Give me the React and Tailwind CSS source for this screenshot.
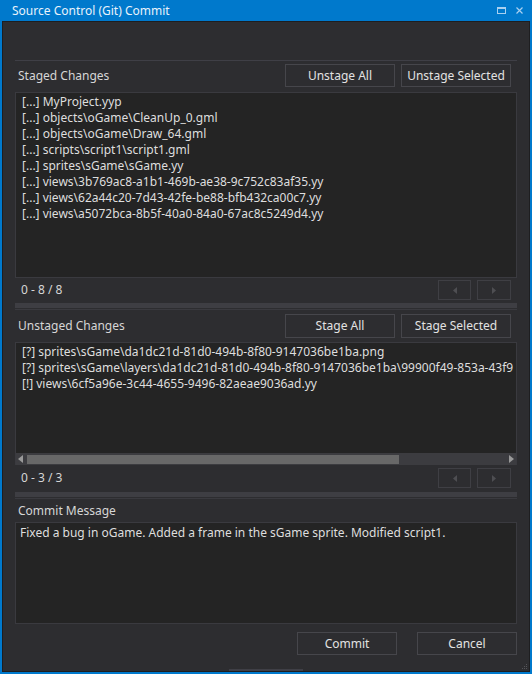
import React from 'react';

const staged = [
    '[...] MyProject.yyp',
    '[...] objects\\oGame\\CleanUp_0.gml',
    '[...] objects\\oGame\\Draw_64.gml',
    '[...] scripts\\script1\\script1.gml',
    '[...] sprites\\sGame\\sGame.yy',
    '[...] views\\3b769ac8-a1b1-469b-ae38-9c752c83af35.yy',
    '[...] views\\62a44c20-7d43-42fe-be88-bfb432ca00c7.yy',
    '[...] views\\a5072bca-8b5f-40a0-84a0-67ac8c5249d4.yy',
];

const unstaged = [
    '[?] sprites\\sGame\\da1dc21d-81d0-494b-8f80-9147036be1ba.png',
    '[?] sprites\\sGame\\layers\\da1dc21d-81d0-494b-8f80-9147036be1ba\\99900f49-853a-43f9',
    '[!] views\\6cf5a96e-3c44-4655-9496-82aeae9036ad.yy',
];

const Button = ({ children, className = '' }) => (
    <button className={`flex items-center justify-center border border-[#46464b] bg-[#2d2d30] text-[#e2e2e2] text-[12px] ${className}`}>
        {children}
    </button>
);

const NavButtons = () => (
    <div className="ml-auto flex gap-[6px]">
        <div className="flex h-[20px] w-[33px] items-center justify-center border border-[#3f3f44]">
            <svg width="4" height="7" viewBox="0 0 4 7"><path d="M4 0 L0 3.5 L4 7 Z" fill="#4e4e52" /></svg>
        </div>
        <div className="flex h-[20px] w-[34px] items-center justify-center border border-[#3f3f44]">
            <svg width="4" height="7" viewBox="0 0 4 7"><path d="M0 0 L4 3.5 L0 7 Z" fill="#4e4e52" /></svg>
        </div>
    </div>
);

const Splitter = () => (
    <>
        <div className="h-[5px] bg-[#3e3e43]" />
        <div className="mt-px h-px bg-[#3a3a3f]" />
    </>
);

const App = () => {
    return (
        <div className="flex h-[674px] w-[532px] flex-col bg-[#0079cc] font-['Noto_Sans','Open_Sans',sans-serif] text-[12px]">
            {/* title bar */}
            <div className="flex h-[21px] items-center pl-3 text-[12px] text-[#e8f2fb]">
                <span>Source Control (Git) Commit</span>
                <div className="ml-auto flex items-center gap-[10px] pr-[9px]">
                    <svg width="9" height="7" viewBox="0 0 9 7">
                        <rect x="0.5" y="0.5" width="8" height="6" fill="none" stroke="#a9d0f0" />
                        <rect x="0" y="0" width="9" height="2" fill="#a9d0f0" />
                    </svg>
                    <svg width="7" height="7" viewBox="0 0 7 7">
                        <path d="M0.5 0.5 L6.5 6.5 M6.5 0.5 L0.5 6.5" stroke="#a9d0f0" strokeWidth="1.2" />
                    </svg>
                </div>
            </div>

            <div className="relative mx-[2px] mb-[2px] flex flex-1 flex-col border border-[#1e1e20] bg-[#2d2d30] px-3 pt-[38px] text-[#dedede]">
                <div className="h-px bg-[#3f3f46]" />

                {/* staged */}
                <div className="flex h-[31px] items-start pt-[3px] pr-[6px]">
                    <span className="pl-[3px] leading-[23px] text-[#d6d6d6]">Staged Changes</span>
                    <div className="ml-auto flex gap-[6px]">
                        <Button className="h-[23px] w-[110px]">Unstage All</Button>
                        <Button className="h-[23px] w-[110px]">Unstage Selected</Button>
                    </div>
                </div>
                <div className="h-[186px] overflow-hidden border border-[#3a3a3f] bg-[#242424] pl-[6px] pt-px">
                    {staged.map(s => (
                        <div key={s} className="whitespace-nowrap leading-[16px]">{s}</div>
                    ))}
                </div>
                <div className="flex h-[25px] items-start pt-[2px] pl-[6px] pr-[6px]">
                    <span className="leading-[20px] text-[#d6d6d6]">0 - 8 / 8</span>
                    <NavButtons />
                </div>
                <Splitter />

                {/* unstaged */}
                <div className="flex h-[32px] items-start pt-[4px] pr-[6px]">
                    <span className="pl-[3px] leading-[24px] text-[#d6d6d6]">Unstaged Changes</span>
                    <div className="ml-auto flex gap-[6px]">
                        <Button className="h-[24px] w-[110px]">Stage All</Button>
                        <Button className="h-[24px] w-[110px]">Stage Selected</Button>
                    </div>
                </div>
                <div className="flex h-[123px] flex-col border-x border-t border-[#3a3a3f] bg-[#242424]">
                    <div className="flex-1 overflow-hidden pl-[6px] pt-px">
                        {unstaged.map(s => (
                            <div key={s} className="whitespace-nowrap leading-[16px]">{s}</div>
                        ))}
                    </div>
                    <div className="flex h-[12px] items-center bg-[#3c3c40] px-[2px]">
                        <svg width="5" height="8" viewBox="0 0 5 8"><path d="M5 0 L0 4 L5 8 Z" fill="#9a9a9a" /></svg>
                        <div className="ml-[4px] h-[9px] w-[372px] bg-[#686868]" />
                        <svg className="ml-auto" width="5" height="8" viewBox="0 0 5 8"><path d="M0 0 L5 4 L0 8 Z" fill="#9a9a9a" /></svg>
                    </div>
                </div>
                <div className="flex h-[27px] items-start pt-[3px] pl-[6px] pr-[6px]">
                    <span className="leading-[20px] text-[#d6d6d6]">0 - 3 / 3</span>
                    <NavButtons />
                </div>
                <Splitter />

                {/* commit message */}
                <div className="h-[23px] pl-[3px] leading-[23px] text-[#d6d6d6]">Commit Message</div>
                <div className="h-[102px] border border-[#3a3a3f] bg-[#242424] pl-[4px] pt-[2px]">
                    <div className="leading-[16px]">Fixed a bug in oGame. Added a frame in the sGame sprite. Modified script1.</div>
                </div>
                <div className="mt-[8px] flex justify-end gap-5">
                    <Button className="h-[23px] w-[100px]">Commit</Button>
                    <Button className="h-[23px] w-[100px]">Cancel</Button>
                </div>

                <div className="flex-1" />
                <div className="flex justify-center">
                    <div className="h-[2px] w-[74px] bg-[#3f3f46]" />
                </div>

                {/* resize grip */}
                <svg className="absolute bottom-px right-px" width="6" height="6" viewBox="0 0 6 6">
                    <rect x="4" y="0" width="1" height="1" fill="#55555a" />
                    <rect x="2" y="2" width="1" height="1" fill="#55555a" />
                    <rect x="4" y="2" width="1" height="1" fill="#55555a" />
                    <rect x="0" y="4" width="1" height="1" fill="#55555a" />
                    <rect x="2" y="4" width="1" height="1" fill="#55555a" />
                    <rect x="4" y="4" width="1" height="1" fill="#55555a" />
                </svg>
            </div>
        </div>
    );
};

export default App;
